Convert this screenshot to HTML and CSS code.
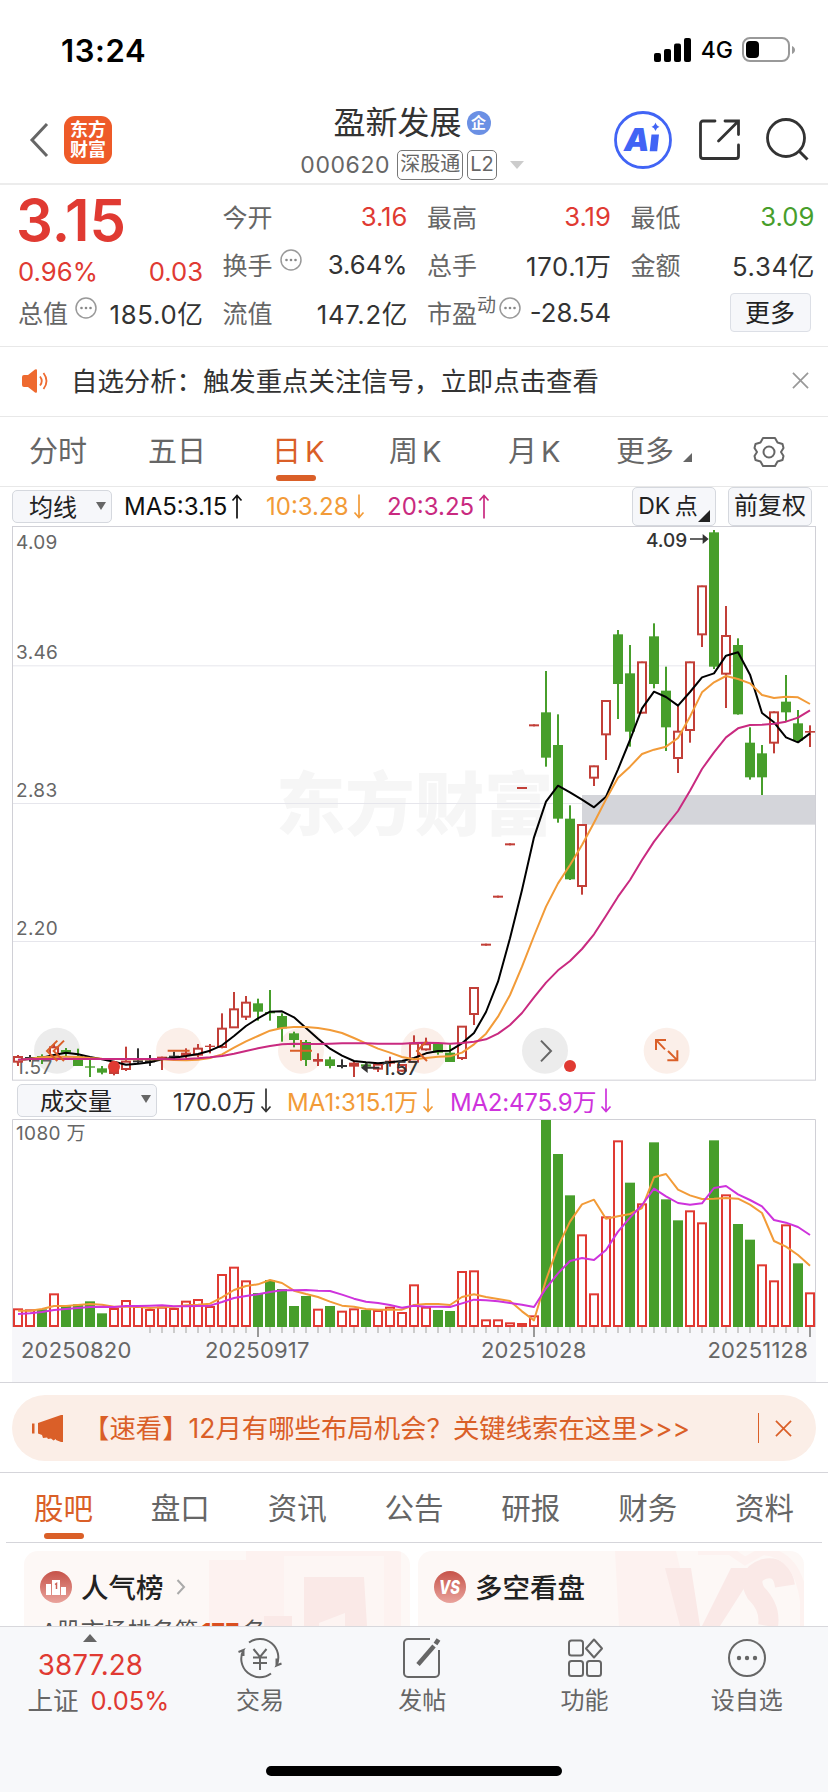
FILE: index.html
```html
<!DOCTYPE html>
<html lang="zh-CN">
<head>
    <meta charset="UTF-8">
    <meta name="viewport" content="width=device-width, initial-scale=1.0">
    <title>盈新发展 000620</title>
    <link rel="stylesheet" href="styles.css">
</head>
<body>

    <svg width="0" height="0" class="defs">
        <symbol id="up" viewBox="0 0 12 25"><path d="M6 24.500V1.500M1.500 6.500L6 1.500l4.500 5" fill="none" stroke="currentColor" stroke-width="1.700"/></symbol>
        <symbol id="down" viewBox="0 0 12 25"><path d="M6 .500v23M1.500 18.500L6 23.500l4.500-5" fill="none" stroke="currentColor" stroke-width="1.700"/></symbol>
        <symbol id="dots" viewBox="0 0 22 22"><circle cx="11" cy="11" r="10" fill="none" stroke="#999" stroke-width="1.500"/><g fill="#888"><circle cx="6.500" cy="11" r="1.300"/><circle cx="11" cy="11" r="1.300"/><circle cx="15.500" cy="11" r="1.300"/></g></symbol>
        <symbol id="close" viewBox="0 0 18 18"><path d="M1 1l16 16M17 1L1 17" fill="none" stroke="currentColor" stroke-width="1.800"/></symbol>
        <linearGradient id="ball" x2="0" y2="1"><stop stop-color="#c65349"/><stop offset="1" stop-color="#e9a39c"/></linearGradient>
    </svg>

    <div class="status">
        <span class="time">13:24</span>
        <div class="status-right">
            <svg width="38" height="24" viewBox="0 0 38 24"><rect x="0" y="15" width="7" height="9" rx="2"/><rect x="10" y="11" width="7" height="13" rx="2"/><rect x="20" y="5.500" width="7" height="18.500" rx="2"/><rect x="30" y="0" width="7" height="24" rx="2"/></svg>
            <span class="net">4G</span>
            <svg width="54" height="26" viewBox="0 0 54 26"><rect x="1" y="1" width="46" height="23" rx="7" fill="none" stroke="#999" stroke-width="2"/><rect x="4" y="4" width="13" height="17" rx="4"/><path d="M50 9c4 1.500 4 6.500 0 8z" fill="#999"/></svg>
        </div>
    </div>

    <header class="header">
        <div class="header-left">
            <svg width="22" height="36" viewBox="0 0 22 36"><path d="M19 2L4 18l15 16" fill="none" stroke="#666" stroke-width="3"/></svg>
            <div class="logo"><span>东方</span><span>财富</span></div>
        </div>
        <div class="title">
            <div class="name">盈新发展<i class="corp">企</i></div>
            <div class="code"><span>000620</span><b>深股通</b><b class="l2">L2</b><i class="caret"></i></div>
        </div>
        <div class="header-right">
            <svg width="60" height="60" viewBox="0 0 60 60">
                <circle cx="30" cy="30" r="27.500" fill="none" stroke="#4164f5" stroke-width="2.800"/>
                <text x="11" y="40.500" class="ai">A</text>
                <path d="M38.500 24.500h7.500l-1.800 16.800h-7.500z M42.500 12.500q1 3.500 4 4.200-3 1-4 4.200-1-3.200-4-4.200 3-.7 4-4.200z" fill="#4164f5"/>
            </svg>
            <svg width="42" height="42" viewBox="0 0 42 42"><path d="M16 2H4a2.500 2.500 0 0 0-2.500 2.500V37A2.500 2.500 0 0 0 4 39.500h33a2.500 2.500 0 0 0 2.500-2.500V26M26 2h13.500v13.500M39 2.500L19.500 22" fill="none" stroke="#333" stroke-width="2.800" stroke-linecap="round"/></svg>
            <svg width="44" height="44" viewBox="0 0 44 44"><circle cx="20" cy="20" r="18.500" fill="none" stroke="#333" stroke-width="2.800"/><path d="M33 33l8.500 8.500" stroke="#333" stroke-width="3"/></svg>
        </div>
    </header>

    <section class="quote">
        <div class="price">
            <div class="last red">3.15</div>
            <div class="row chg red"><span>0.96%</span><span>0.03</span></div>
            <div class="row"><label>总值<svg class="tip"><use href="#dots"/></svg></label><span class="u">185.0亿</span></div>
        </div>
        <div class="col">
            <div class="row"><label>今开</label><span class="red">3.16</span></div>
            <div class="row"><label>换手<svg class="tip"><use href="#dots"/></svg></label><span>3.64%</span></div>
            <div class="row"><label>流值</label><span class="u">147.2亿</span></div>
        </div>
        <div class="col">
            <div class="row"><label>最高</label><span class="red">3.19</span></div>
            <div class="row"><label>总手</label><span class="u">170.1万</span></div>
            <div class="row"><label>市盈<small>动</small><svg class="tip pe"><use href="#dots"/></svg></label><span>-28.54</span></div>
        </div>
        <div class="col">
            <div class="row"><label>最低</label><span class="green">3.09</span></div>
            <div class="row"><label>金额</label><span class="u">5.34亿</span></div>
            <div class="row end"><button class="more">更多</button></div>
        </div>
    </section>

    <section class="notice">
        <svg width="27" height="26" viewBox="0 0 27 26"><path d="M0 9q0-2 2-2h4l7-5.500q2-1 2 1v21q0 2-2 1L6 19H2q-2 0-2-2z" fill="#ee6a30"/><path d="M18 8.500q3.500 4.500 0 9M21.500 5q6 8 0 16" fill="none" stroke="#ee6a30" stroke-width="1.800"/></svg>
        <span>自选分析：触发重点关注信号，立即点击查看</span>
        <svg class="x"><use href="#close"/></svg>
    </section>

    <nav class="periods">
        <span>分时</span>
        <span>五日</span>
        <span class="on k">日K</span>
        <span class="k">周K</span>
        <span class="k">月K</span>
        <span>更多<i class="corner"></i></span>
        <svg width="34" height="32" viewBox="0 0 34 32"><path d="M11 2h12l2.500 4.500 5 1.500 1 4-2.500 4 2.500 4-1 4-5 1.500L23 30H11l-2.500-4.500-5-1.500-1-4L5 16l-2.500-4 1-4 5-1.500z" fill="none" stroke="#666" stroke-width="2" stroke-linejoin="round"/><circle cx="17" cy="16" r="5.500" fill="none" stroke="#666" stroke-width="2"/></svg>
    </nav>

    <div class="ma">
        <div class="select">均线<i></i></div>
        <span class="ma5">MA5:3.15<svg class="arr"><use href="#up"/></svg></span>
        <span class="ma10">10:3.28<svg class="arr"><use href="#down"/></svg></span>
        <span class="ma20">20:3.25<svg class="arr"><use href="#up"/></svg></span>
        <div class="tag dk">DK 点<i></i></div>
        <div class="tag">前复权</div>
    </div>

    <svg id="kline" class="kline" viewBox="36 18 2412 1665"></svg>

    <div class="ma vol">
        <div class="select wide">成交量<i></i></div>
        <span class="v0">170.0万<svg class="arr"><use href="#down"/></svg></span>
        <span class="v1">MA1:315.1万<svg class="arr"><use href="#down"/></svg></span>
        <span class="v2">MA2:475.9万<svg class="arr"><use href="#down"/></svg></span>
    </div>

    <svg id="volume" class="volume" viewBox="36 117 2412 624"></svg>
    <div class="axis">
        <svg id="ticks" viewBox="36 0 2412 30"></svg>
        <div class="dates"><span>20250820</span><span>20250917</span><span>20251028</span><span>20251128</span></div>
    </div>

    <section class="promo">
        <div class="banner">
            <svg width="31" height="27" viewBox="0 0 31 27"><path d="M0 8.500h2.500v10H0zM6 8L29 0h2v27h-2l-5-2v-1l-2.500 1.500L19 23.500l-3 .5-1-1.500L11 23l-1-3-4-1.500z" fill="#da5f28"/></svg>
            <span>【速看】12月有哪些布局机会？关键线索在这里&gt;&gt;&gt;</span>
            <i></i>
            <svg class="x"><use href="#close"/></svg>
        </div>
    </section>

    <nav class="tabs">
        <span class="on">股吧</span>
        <span>盘口</span>
        <span>资讯</span>
        <span>公告</span>
        <span>研报</span>
        <span>财务</span>
        <span>资料</span>
    </nav>

    <section class="cards">
        <div class="card">
            <svg class="deco" viewBox="0 0 386 75"><path d="M185 9h37V0h155v75H185z" fill="#fdf2f0"/><path d="M260 5h100v70H260z" fill="#fdf6f4"/><path d="M280 26h60l3 49H280zM240 65h28v10h-28z" fill="#fae9e7"/><path d="M295 72l26-10v13h-26z" fill="#fdf4f2"/></svg>
            <div class="card-title">
                <svg width="32" height="32" viewBox="0 0 32 32"><circle cx="16" cy="16" r="16" fill="url(#ball)"/><path d="M6 13h5v11H6zM12 9h8v15h-8zM21 16h5v8h-5z" fill="#fff"/><path d="M15 13.500l1.500-1v5.500" fill="none" stroke="#cc6056" stroke-width="1.500"/></svg>
                <span>人气榜</span>
                <svg width="10" height="16" viewBox="0 0 10 16"><path d="M1.500 1L8 8l-6.500 7" fill="none" stroke="#aaa" stroke-width="2"/></svg>
            </div>
            <p>A股市场排名第<b>177</b>名</p>
        </div>
        <div class="card">
            <svg class="deco" viewBox="0 0 386 75"><path d="M197 0h61l18 75h-75z" fill="#fdf2f0"/><path d="M247 17h26l9 58h-20zM313 17h26l-37 58h-18z" fill="#fae9e7"/><path d="M367 35q-3-21-21-17-18 6-8 24 15 15 12 33" fill="none" stroke="#fae9e7" stroke-width="20"/><path d="M280 0h32l15 10L345 0q35 3 41 50v25" fill="none" stroke="#fdf2f0" stroke-width="8"/></svg>
            <div class="card-title">
                <svg width="32" height="32" viewBox="0 0 32 32"><circle cx="16" cy="16" r="16" fill="url(#ball)"/><text x="5" y="23" class="vs" textLength="21" lengthAdjust="spacingAndGlyphs">VS</text></svg>
                <span>多空看盘</span>
            </div>
        </div>
    </section>

    <footer class="footer">
        <div class="index">
            <i></i>
            <div class="red">3877.28</div>
            <div class="sub"><span>上证</span><span class="red">0.05%</span></div>
        </div>
        <div class="item">
            <svg width="46" height="42" viewBox="0 0 46 42" class="ico"><path d="M12 5.500A18.500 18.500 0 0 1 39.500 28.500l5-2M39.500 28.500v-7M34 36.500A18.500 18.500 0 0 1 6.500 13l-5 2M6.500 13v6" /><path d="M16.500 12l6.500 8 6.500-8M23 20v13M16 20.500h14M16 26h14"/></svg>
            <span>交易</span>
        </div>
        <div class="item">
            <svg width="40" height="42" viewBox="0 0 40 42" class="ico"><path d="M28 2H6a4 4 0 0 0-4 4v30a4 4 0 0 0 4 4h27a4 4 0 0 0 4-4V13"/><path d="M16 27.500L32 9" stroke-width="4.500"/><path d="M33.500 7l3-4.500" stroke-width="4.500"/></svg>
            <span>发帖</span>
        </div>
        <div class="item">
            <svg width="38" height="42" viewBox="0 0 38 42" class="ico"><rect x="3" y="3.500" width="14" height="15" rx="2.500"/><rect x="3" y="24" width="14" height="15" rx="2.500"/><rect x="21" y="24" width="14" height="15" rx="2.500"/><path d="M28 2.500l8 9-8 9-8-9z" stroke-linejoin="round"/></svg>
            <span>功能</span>
        </div>
        <div class="item">
            <svg width="42" height="42" viewBox="0 0 42 42" class="ico"><circle cx="21" cy="21" r="18"/><g fill="#666" stroke="none"><circle cx="13" cy="21" r="2.200"/><circle cx="21" cy="21" r="2.200"/><circle cx="29" cy="21" r="2.200"/></g></svg>
            <span>设自选</span>
        </div>
        <div class="home"></div>
    </footer>

    <script src="chart.js"></script>
</body>
</html>
```

FILE: styles.css
```css
* {
    box-sizing: border-box;
}

body {
    margin: 0;
    width: 828px;
    height: 1792px;
    overflow: hidden;
    background: #fff;
    color: #333;
    font-family: Inter, "Noto Sans CJK SC", sans-serif;
    font-size: 25px;
    white-space: nowrap;
}

svg {
    display: block;
    flex: none;
}

i, b {
    font-style: normal;
    font-weight: normal;
}

.defs {
    position: absolute;
}

.red { color: #e03a32; }
.green { color: #479e2b; }

/* status bar */
.status {
    height: 100px;
    padding: 0 32px 0 61px;
    display: flex;
    justify-content: space-between;
    align-items: center;
    color: #000;
}

.time {
    font-size: 31px;
    font-weight: 600;
    letter-spacing: 0.6px;
}

.status-right {
    display: flex;
    align-items: center;
    gap: 9px;
}

.net {
    font-size: 23px;
    font-weight: 500;
}

/* header */
.header {
    height: 85px;
    border-bottom: 2px solid #ececec;
    padding: 0 18px 0 28px;
    display: flex;
    justify-content: space-between;
    align-items: center;
}

.header-left, .header-right {
    display: flex;
    align-items: center;
    margin-top: -3px;
}

.header-left {
    gap: 14px;
}

.logo {
    width: 48px;
    height: 48px;
    border-radius: 11px;
    background: #ee5a28;
    color: #fff;
    font-size: 18px;
    font-weight: 700;
    line-height: 20px;
    display: flex;
    flex-direction: column;
    align-items: center;
    justify-content: center;
}

.title {
    margin-left: 99px;
    display: flex;
    flex-direction: column;
    align-items: center;
}

.name {
    font-size: 32px;
    line-height: 44px;
    margin-top: -3px;
    display: flex;
    align-items: center;
    gap: 5px;
}

.corp {
    width: 24px;
    height: 24px;
    border-radius: 50%;
    background: #6b90e4;
    color: #fff;
    font-size: 15px;
    font-weight: 700;
    line-height: 24px;
    text-align: center;
}

.code {
    display: flex;
    align-items: center;
    font-size: 23px;
    line-height: 34px;
    color: #666;
    margin-top: 3px;
    margin-bottom: -2px;
}

.code span {
    letter-spacing: 0.6px;
    margin-right: 7px;
}

.code b {
    height: 30px;
    line-height: 27px;
    font-size: 20px;
    border: 1.5px solid #777;
    border-radius: 5px;
    padding: 0 2px;
    margin-right: 4px;
}

.code .l2 {
    padding: 0 2px;
}

.caret {
    border: 7px solid transparent;
    border-top: 8px solid #ccc;
    border-bottom: 0;
    margin-left: 9px;
}

.header-right {
    gap: 25px;
}

.header-right svg:nth-child(2) {
    margin-left: 1px;
}

.ai {
    font: italic 900 32px Inter, sans-serif;
    fill: #4164f5;
}

/* quote */
.quote {
    height: 162px;
    padding: 7px 13px 0 18px;
    border-bottom: 1px solid #e8e8e8;
    display: grid;
    grid-template-columns: 185px 185px 184px 184px;
    column-gap: 19.500px;
}

.row {
    height: 48px;
    display: flex;
    justify-content: space-between;
    align-items: center;
    font-size: 25.700px;
}

.row label {
    font-size: 25px;
    color: #666;
    display: flex;
    align-items: center;
}

.u {
    letter-spacing: 0.7px;
    margin-right: -0.7px;
}

.last {
    font-size: 58px;
    font-weight: 600;
    line-height: 56px;
    height: 56px;
    margin-left: -2px;
}

.chg {
    height: 40px;
    padding-top: 7px;
}

.tip {
    width: 22px;
    height: 22px;
    margin: -8px 0 0 7px;
}

.pe {
    margin-left: 3px;
}

.row small {
    font-size: 19px;
    margin-top: -17px;
}

.end {
    justify-content: flex-end;
}

.more {
    width: 81px;
    height: 39px;
    margin-right: 4px;
    border: 1.500px solid #dcdfe6;
    border-radius: 4px;
    background: #f6f7fa;
    font: 25px/34px "Noto Sans CJK SC", sans-serif;
    color: #222;
    padding: 0 0 2px;
}

/* notice */
.notice {
    height: 70px;
    border-bottom: 1px solid #e8e8e8;
    padding: 0 19px 2px 22px;
    display: flex;
    align-items: center;
    font-size: 26.400px;
}

.notice span {
    margin: -2px 0 0 22px;
    flex: 1;
}

.x {
    width: 17px;
    height: 17px;
    color: #999;
}

/* period tabs */
.periods {
    height: 70px;
    padding-left: 29px;
    border-bottom: 1px solid #e8e8e8;
    display: grid;
    grid-template-columns: 119px 124px 117px 119px 108px 136px 34px;
    justify-items: start;
    align-items: center;
    font-size: 29px;
    color: #666;
}

.periods span {
    position: relative;
    line-height: 69px;
}

.periods .k {
    letter-spacing: 4px;
}

.periods .on, .tabs .on {
    color: #da5f28;
}

.on::after {
    content: "";
    position: absolute;
    left: 50%;
    bottom: 5px;
    width: 40px;
    height: 6px;
    margin-left: -20px;
    border-radius: 3px;
    background: #da5f28;
}

.k.on::after {
    margin-left: -24px;
}

.corner {
    display: inline-block;
    border-left: 9px solid transparent;
    border-bottom: 9px solid #666;
    margin-left: 9px;
}

/* indicator rows */
.ma {
    height: 39px;
    padding: 0 16px 0 12px;
    display: flex;
    align-items: center;
    font-size: 24px;
}

.ma span {
    display: flex;
    align-items: center;
}

.arr {
    width: 12px;
    height: 25px;
    margin-left: 4px;
}

.select {
    width: 100px;
    height: 33px;
    border: 1.500px solid #d5d8de;
    border-radius: 5px;
    background: #f6f7fa;
    display: flex;
    justify-content: space-between;
    align-items: center;
    padding: 0 5px 2px 16px;
    color: #222;
}

.select i {
    border: 5px solid transparent;
    border-top: 8px solid #666;
    border-bottom: 0;
}

.ma5 { margin-left: 12px; color: #111; width: 142px; }
.ma10 { color: #f29b38; width: 121px; }
.ma20 { color: #c92a80; flex: 1; }

.tag {
    width: 84px;
    height: 39px;
    border: 1.500px solid #d5d8de;
    border-radius: 5px;
    background: #f6f7fa;
    color: #222;
    line-height: 36px;
    text-align: center;
    position: relative;
}

.dk {
    margin-right: 12px;
    padding-right: 12px;
    font-size: 23px;
    word-spacing: -2px;
}

.dk i {
    position: absolute;
    right: 5px;
    bottom: 3px;
    border-left: 12px solid transparent;
    border-bottom: 12px solid #222;
}

.vol {
    height: 38px;
    padding: 0 0 0 17px;
}

.wide {
    width: 140px;
    padding-left: 22px;
}

.v0 { margin-left: 16px; width: 114px; }
.v1 { color: #f29b38; width: 163px; }
.v2 { color: #ce33dc; letter-spacing: -0.2px; }

/* charts */
.kline {
    width: 804px;
    height: 555px;
    margin-left: 12px;
}

.volume {
    width: 804px;
    height: 208px;
    margin-left: 12px;
}

.kline text, .volume text {
    font-family: Inter, "Noto Sans CJK SC", sans-serif;
    font-size: 57px;
    letter-spacing: 1px;
    fill: #666;
}

.kline .mark {
    font-weight: 900;
    font-size: 208px;
    letter-spacing: 0;
    fill: #f6f6f6;
}

.kline .tip-text {
    font-weight: 500;
    letter-spacing: 0;
    fill: #333;
}

.axis {
    height: 55px;
    width: 804px;
    margin-left: 12px;
    background: #f7f7fa;
}

.axis svg {
    width: 804px;
    height: 10px;
}

.dates {
    display: flex;
    padding: 0 8px 0 9px;
    font-size: 22px;
    line-height: 26px;
    letter-spacing: 0.2px;
    color: #666;
}

.dates span:nth-child(1) { width: 184px; }
.dates span:nth-child(2) { width: 276px; }
.dates span:nth-child(3) { flex: 1; }

/* promo */
.promo {
    height: 91px;
    border-top: 1px solid #d5d5da;
    border-bottom: 1px solid #d5d5da;
    padding: 12px;
}

.banner {
    height: 66px;
    border-radius: 33px;
    background: #fbeee7;
    color: #da5f28;
    display: flex;
    align-items: center;
    padding: 0 24px 0 20px;
    font-size: 26.400px;
}

.banner span {
    margin: -3px 0 0 20px;
    flex: 1;
}

.banner i {
    width: 1.500px;
    height: 30px;
    margin-right: 16px;
    background: #da5f28;
}

.banner .x {
    color: #da5f28;
}

/* content tabs */
.tabs {
    height: 70px;
    margin: 0 6px;
    padding: 0 28px;
    border-bottom: 1px solid #d5d5da;
    display: flex;
    justify-content: space-between;
    font-size: 29.500px;
    line-height: 70px;
    color: #666;
}

.tabs span {
    position: relative;
}

.tabs .on::after {
    bottom: 3px;
}

/* cards */
.cards {
    height: 83px;
    padding: 8px 24px 0;
    display: flex;
    gap: 8px;
    overflow: hidden;
}

.card {
    width: 386px;
    height: 120px;
    border-radius: 14px;
    background: #fdf8f6;
    padding: 18px 16px;
    position: relative;
    overflow: hidden;
}

.deco {
    position: absolute;
    left: 0;
    top: 0;
    width: 386px;
}

.card-title {
    position: relative;
    display: flex;
    align-items: center;
    gap: 9px;
    height: 36px;
    font-size: 27.500px;
    font-weight: 500;
    color: #222;
}

.card-title span {
    margin-top: -2px;
}

.card-title span + svg {
    margin-left: 3px;
}

.vs {
    font: italic 800 19px Inter, sans-serif;
    fill: #fff;
}

.card p {
    position: relative;
    margin: 11px 0 0 1px;
    font-size: 23.500px;
    line-height: 32px;
    color: #555;
}

.card p b {
    color: #da4f20;
    font-weight: 700;
    margin: 0 3px;
}

/* bottom bar */
.footer {
    height: 166px;
    border-top: 1.500px solid #d8d8dc;
    background: #f7f8fa;
    position: relative;
    display: flex;
    padding-left: 9px;
    color: #666;
}

.index {
    width: 170px;
    padding-right: 7px;
    text-align: center;
    font-size: 27.800px;
}

.index i {
    display: block;
    width: 14px;
    margin: 7px auto 0;
    border: 7px solid transparent;
    border-bottom: 8px solid #666;
    border-top: 0;
}

.index .red {
    line-height: 47px;
}

.index .sub {
    display: flex;
    justify-content: center;
    gap: 12px;
    margin-right: -16px;
    font-size: 25.500px;
    line-height: 24px;
    align-items: center;
}

.index .sub .red {
    line-height: 24px;
}

.item {
    width: 162.500px;
    padding-top: 10px;
    display: flex;
    flex-direction: column;
    align-items: center;
    font-size: 24px;
    line-height: 44px;
}

.ico {
    fill: none;
    stroke: #666;
    stroke-width: 2;
}

.home {
    position: absolute;
    left: 266px;
    bottom: 16px;
    width: 296px;
    height: 10px;
    border-radius: 5px;
    background: #000;
}
```

FILE: chart.js
```js
const RED = '#c23f38', GREEN = '#479e2b', BLACK = '#333';
const x = i => 54 + 36 * i;

// type, body top, body bottom, high, low (type: r = up, f = up filled, g = down, d = flat)
const candles = [
    ['r',1611,1625,1605,1638],['d',1614,1614,1605,1625],['g',1608,1618,1603,1632],['r',1582,1610,1572,1615],
    ['g',1590,1598,1584,1610],['g',1608,1638,1586,1638],['g',1639,1643,1620,1671],['g',1645,1658,1638,1663],
    ['f',1635,1662,1630,1666],['r',1625,1647,1580,1653],['d',1624,1624,1585,1630],['d',1624,1624,1605,1638],
    ['f',1610,1615,1610,1650],['d',1610,1610,1595,1620],['f',1598,1608,1585,1615],['r',1586,1604,1572,1612],
    ['f',1577,1581,1572,1600],['r',1526,1581,1480,1585],['r',1468,1522,1416,1522],['r',1448,1490,1428,1500],
    ['g',1450,1475,1436,1502],['g',1476,1480,1410,1502],['g',1488,1525,1480,1565],['g',1540,1560,1535,1582],
    ['g',1566,1620,1560,1638],['f',1617,1625,1600,1638],['g',1618,1638,1610,1645],['d',1638,1638,1618,1645],
    ['f',1628,1640,1625,1671],['g',1633,1640,1627,1648],['r',1634,1646,1632,1656],['f',1622,1631,1610,1640],
    ['r',1635,1652,1632,1655],['r',1571,1625,1546,1627],['r',1573,1588,1553,1592],['g',1572,1598,1572,1604],
    ['g',1598,1626,1573,1626],['r',1520,1614,1518,1620],['r',1404,1482,1402,1515],['f',1271,1277,1271,1277],
    ['f',1127,1133,1127,1133],['f',970,976,970,976],['f',801,807,801,807],['f',613,619,613,619],
    ['g',577,713,453,740],['g',675,896,583,908],['g',896,1078,856,1080],['r',915,1098,913,1124],
    ['r',739,773,737,798],['r',543,643,541,720],['g',343,492,330,597],['g',460,635,375,680],
    ['r',427,578,425,580],['g',349,492,310,505],['g',512,622,440,693],['r',635,714,555,759],
    ['r',427,630,425,668],['r',199,343,197,381],['g',37,440,30,447],['r',348,461,258,564],
    ['g',375,583,355,584],['g',668,772,622,779],['g',700,772,675,825],['r',577,668,574,700],
    ['g',545,577,465,605],['g',610,662,570,665],['f',633,638,616,681]
];

const ma5 = [1620,1617,1613,1605,1598,1603,1611,1618,1625,1634,1631,1627,1618,1613,1608,1602,1592,1576,1548,1518,1495,1475,1474,1492,1524,1556,1586,1607,1623,1627,1630,1627,1623,1614,1600,1593,1592,1570,1539,1476,1385,1255,1110,952,845,797,817,839,862,830,748,660,565,515,531,557,516,472,460,407,397,464,579,607,652,667,640];
const ma10 = [1621,1616,1612,1610,1610,1611,1614,1616,1617,1618,1618,1618,1618,1620,1621,1619,1614,1603,1583,1564,1548,1532,1524,1521,1521,1524,1530,1539,1554,1570,1586,1598,1611,1618,1614,1610,1609,1598,1573,1541,1490,1425,1340,1248,1160,1090,1035,975,908,838,773,740,702,689,680,654,590,517,487,468,477,490,525,534,530,532,552];
const ma20 = [1619,1617,1617,1617,1616,1617,1617,1617,1617,1617,1617,1617,1617,1618,1617,1615,1612,1608,1601,1593,1585,1578,1573,1571,1572,1572,1571,1570,1570,1570,1571,1571,1571,1569,1568,1569,1571,1569,1565,1558,1541,1515,1479,1432,1388,1351,1323,1287,1243,1187,1130,1080,1020,965,918,873,812,747,697,652,625,615,614,611,605,593,571];

const vols = 'r685 r688 g688 r640 g678 g673 g664 g700 r684 r660 r678 r687 r680 r684 r662 r657 r678 r582 r560 r601 g639 g600 g627 g678 g648 r686 g678 r692 r685 g690 r690 r680 r696 r613 r680 g690 g693 r573 r571 r718 r718 r727 r729 r706 g120 g222 g346 r463 r640 r409 r181 g308 r370 g187 g358 g421 r391 r427 g181 r343 g432 g479 r553 r601 r433 g550 r637'.split(' ');
const vma1 = [692,692,687,678,678,675,672,674,680,680,680,684,681,680,676,674,671,652,630,618,613,600,609,632,642,651,665,677,680,687,689,689,689,675,672,672,675,651,643,651,657,663,694,721,600,500,425,373,359,416,409,402,384,292,282,329,346,357,356,354,356,374,399,483,500,525,557];
const vma2 = [702,700,696,690,687,684,681,680,681,678,678,677,676,679,679,678,677,666,654,648,643,636,631,631,630,632,633,644,656,665,669,675,683,677,680,680,681,670,659,661,664,669,674,681,625,580,543,534,540,510,455,413,375,326,349,369,374,370,324,318,343,360,379,420,428,441,465];

const rect = (x, y, w, h, fill, extra = '') => `<rect x="${x}" y="${y}" width="${w}" height="${h}" fill="${fill}" ${extra}/>`;
const line = (data, color) => `<polyline points="${data.map((v, i) => x(i) + ',' + v).join(' ')}" fill="none" stroke="${color}" stroke-width="6" stroke-linejoin="round"/>`;

function drawKline() {
    let s = rect(37.5, 19.5, 2409, 1661, '#fff', 'stroke="#d0d0d6" stroke-width="3"');
    s += '<text class="mark" x="828" y="929">东方财富</text>';
    [437, 850, 1264].forEach(y => s += rect(39, y - 1, 2406, 3, '#e6e6ec'));
    s += rect(1746, 825, 699, 89, '#d4d5da');
    [87, 418, 831, 1246, 1661].forEach((ty, i) => {
        s += `<text x="48" y="${ty}">${['4.09', '3.46', '2.83', '2.20', '1.57'][i]}</text>`;
    });

    // floating buttons under the candles
    [171, 537, 903, 1272, 1635, 2000].forEach((cx, i) => {
        s += `<circle cx="${cx}" cy="1592" r="69" fill="${i % 4 ? '#da5f28' : '#555'}" opacity="${i % 4 ? .1 : .11}"/>`;
    });

    candles.forEach(([t, top, bottom, high, low], i) => {
        const c = t === 'g' ? GREEN : t === 'd' ? BLACK : RED;
        const cx = x(i);
        s += rect(cx - 3, high, 6, low - high, c);
        if (t === 'r') s += rect(cx - 12, top, 24, bottom - top, '#fff', `stroke="${c}" stroke-width="6"`);
        else if (t === 'd') s += rect(cx - 15, top - 3, 30, 6, c);
        else s += rect(cx - 15, top, 30, bottom - top, c);
    });
    s += line(ma5, '#000') + line(ma10, '#f29b38') + line(ma20, '#c92a80');
    s += '<circle cx="342" cy="1640" r="18" fill="#e03a32"/><circle cx="1710" cy="1638" r="18" fill="#e03a32"/>';

    // high / low callouts
    s += '<g fill="#333"><path d="M2070 55h38v-13l18 15-18 15v-13h-38zM1138 1640h-35v-13l-20 16 20 16v-13h35z"/></g>';
    s += '<text class="tip-text" x="1938" y="80">4.09</text><text class="tip-text" x="1146" y="1664">1.57</text>';

    s += '<g fill="none" stroke="#da5f28" stroke-width="6"><path d="M172 1562l-31 31 31 30M192 1562l-31 31 31 30M503 1592h66M870 1592h66M903 1560v62M1281 1562l-30 31 30 30"/>';
    s += '<path d="M1968 1590v-30h30M1970 1562l25 26M2002 1621h30v-30M2030 1619l-26-26"/></g>';
    s += '<path d="M1623 1562l30 31-30 31" fill="none" stroke="#666" stroke-width="6"/>';
    document.getElementById('kline').innerHTML = s;
}

function drawVolume() {
    let s = '<path d="M37.500 741V118.500H2446.500V741" fill="none" stroke="#d0d0d6" stroke-width="3"/><text x="48" y="179">1080 万</text>';
    vols.forEach((v, i) => {
        const y = +v.slice(1);
        if (v[0] === 'g') s += rect(x(i) - 15, y, 30, 741 - y, GREEN);
        else s += rect(x(i) - 12, y + 3, 24, Math.max(735 - y, 3), '#fff', 'stroke="#e03a32" stroke-width="6"');
    });
    s += line(vma1, '#f29b38') + line(vma2, '#ce33dc');
    document.getElementById('volume').innerHTML = s;

    let t = '';
    for (let i = 11; i < 67; i++) {
        const long = i === 20 || i === 43 || i === 66;
        t += rect(x(i) - 3, 0, 6, long ? 30 : 18, long ? '#999' : '#ccc');
    }
    document.getElementById('ticks').innerHTML = t;
}

drawKline();
drawVolume();
```
